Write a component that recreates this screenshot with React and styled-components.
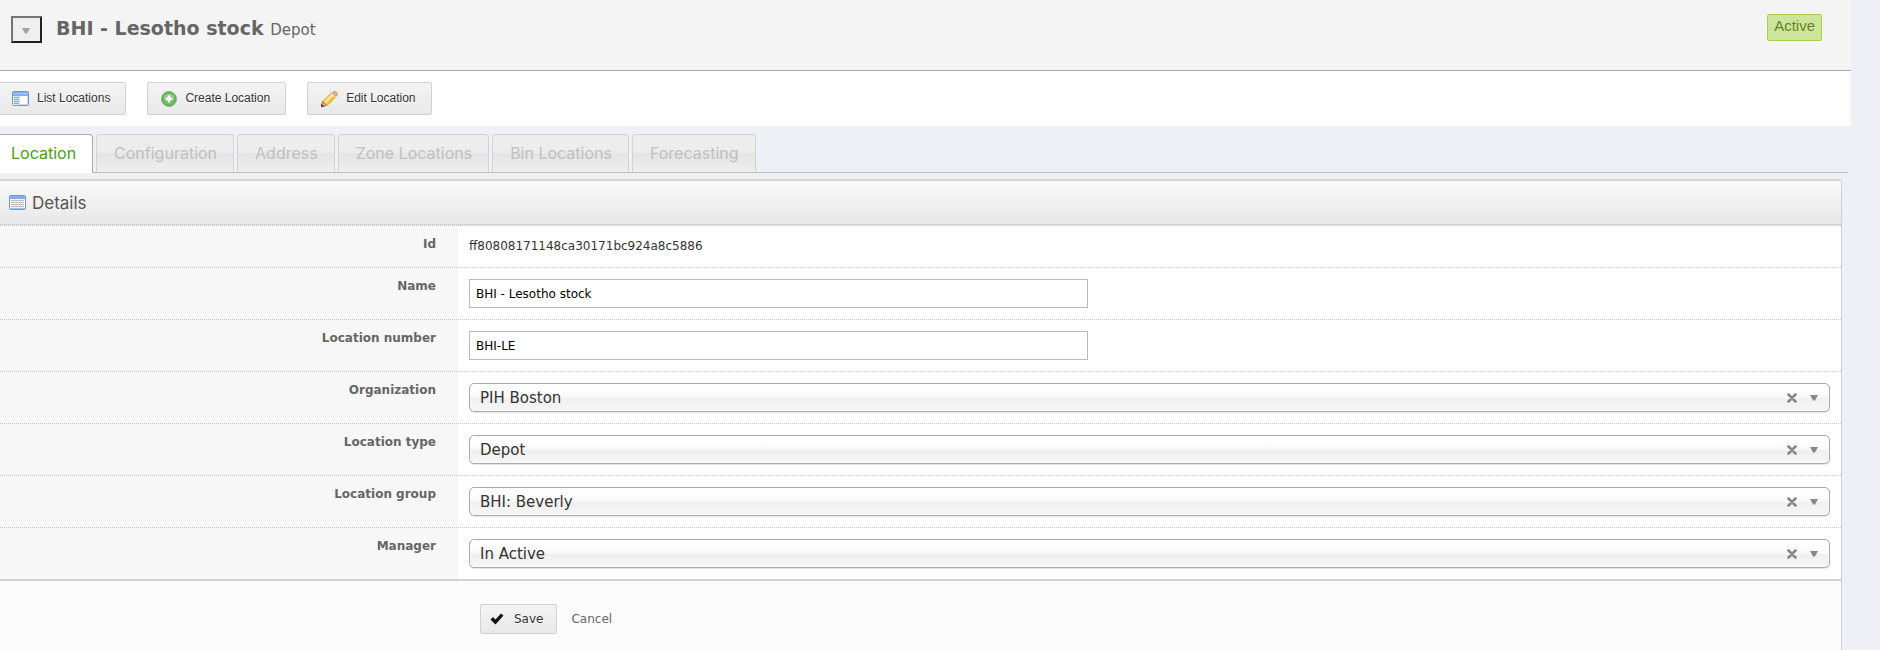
import React, { useState } from 'react';
import styled, { createGlobalStyle, css } from 'styled-components';

const actions = [
	{ name: 'List Locations', icon: 'list' },
	{ name: 'Create Location', icon: 'add' },
	{ name: 'Edit Location', icon: 'pencil' },
];

const tabs = ['Location', 'Configuration', 'Address', 'Zone Locations', 'Bin Locations', 'Forecasting'];

const selects = [
	{ id: 'organization', label: 'Organization', value: 'PIH Boston' },
	{ id: 'locationType', label: 'Location type', value: 'Depot' },
	{ id: 'locationGroup', label: 'Location group', value: 'BHI: Beverly' },
	{ id: 'manager', label: 'Manager', value: 'In Active' },
];

const ListIcon = () => (
	<svg width="17" height="16" viewBox="0 0 17 16" aria-hidden="true">
		<rect x="0.5" y="0.5" width="16" height="14" rx="1" fill="#fff" stroke="#6f97d3" />
		<rect x="1" y="1" width="15" height="4" fill="#86aee6" />
		<path d="M1 2.500h15" stroke="#a9c8f1" />
		<rect x="1" y="5" width="6" height="9" fill="#e9f0fa" />
		<path d="M2 6.500h4M2 8.500h4M2 10.500h4M2 12.500h4" stroke="#7b9fd3" />
		<path d="M7 5v9" stroke="#8db0e0" />
		<path d="M8 13.500h8M15.500 5v9" stroke="#c5daf5" />
	</svg>
);

const AddIcon = () => (
	<svg width="16" height="16" viewBox="0 0 16 16" aria-hidden="true">
		<circle cx="8" cy="8" r="7.5" fill="#5fa757" stroke="#86bb80" />
		<circle cx="8" cy="8" r="6" fill="#76bc6b" />
		<path d="M2.500 7a5.600 5 0 0 1 11 0z" fill="#97d08c" />
		<path d="M8 4.500v7M4.500 8h7" stroke="#fff" strokeWidth="2.400" />
	</svg>
);

const PencilIcon = () => (
	<svg width="17" height="16" viewBox="0 0 17 16" aria-hidden="true">
		<path d="M1.500 11L11 1.500l4 4L5.500 15z" fill="#f8c93f" stroke="#cf9236" />
		<path d="M4 11l8-8" stroke="#fdee9f" strokeWidth="2" />
		<path d="M11.500 1.500Q14-0.500 15.800 1.500T15 5z" fill="#eebd9a" stroke="#c88a5c" />
		<path d="M10.500 2l4 4" stroke="#dcd8d0" strokeWidth="1.500" />
		<path d="M0.500 15.500l1-5 4 4z" fill="#dcaa76" stroke="#b27b46" />
		<path d="M0 16v-3.500L3.500 16z" fill="#5b4433" />
	</svg>
);

const TableIcon = () => (
	<svg width="17" height="16" viewBox="0 0 17 16" aria-hidden="true">
		<rect x="0.5" y="0.5" width="16" height="14" rx="1" fill="#fff" stroke="#7298d0" />
		<rect x="1" y="1" width="15" height="3" fill="#86aee6" />
		<path d="M2 5.500h13M2 7.500h13M2 9.500h13M2 11.500h13" stroke="#b0b0b0" strokeDasharray="3 1" />
		<path d="M1 13.500h15" stroke="#a4c0e8" />
		<path d="M5.500 4v9M9.500 4v9M13.500 4v9" stroke="#dedede" />
	</svg>
);

const CheckIcon = () => (
	<svg width="14" height="14" viewBox="0 0 14 14" aria-hidden="true">
		<path d="M0.500 7.500L3 5l2.500 2.500L11 1.500l2.500 2L5.500 12.500z" fill="#111" />
	</svg>
);

const ArrowIcon = ({ color = '#888' }) => (
	<svg width="8" height="6" viewBox="0 0 8 6" aria-hidden="true">
		<path d="M0 0h8L5 5.500H3z" fill={color} />
	</svg>
);

const CrossIcon = () => (
	<svg width="10" height="10" viewBox="0 0 10 10" aria-hidden="true">
		<path d="M1.500 1.500l7 7M8.500 1.500l-7 7" stroke="#888" strokeWidth="2.600" strokeLinecap="round" />
	</svg>
);

const icons = { list: ListIcon, add: AddIcon, pencil: PencilIcon };

const SelectRow = ({ id, label, value }) => {
	const [current, setCurrent] = useState(value);
	return (
		<Row>
			<Label htmlFor={id}>{label}</Label>
			<Value>
				<SelectBox>
					<Select id={id} value={current} onChange={(e) => setCurrent(e.target.value)}>
						<option value=""></option>
						<option>{value}</option>
					</Select>
					<ClearButton type="button" aria-label={`Clear ${label}`} onClick={() => setCurrent('')}>
						<CrossIcon />
					</ClearButton>
					<ArrowIcon />
				</SelectBox>
			</Value>
		</Row>
	);
};

const App = () => (
	<>
		<GlobalStyle />
		<Header>
			<MenuButton type="button" aria-label="Location actions">
				<ArrowIcon color="#a3a3a3" />
			</MenuButton>
			<Title>
				BHI - Lesotho stock <small>Depot</small>
			</Title>
			<Status>Active</Status>
		</Header>
		<Toolbar>
			{actions.map(({ name, icon }) => {
				const Icon = icons[icon];
				return (
					<ToolButton key={name} type="button">
						<Icon />
						<span>{name}</span>
					</ToolButton>
				);
			})}
		</Toolbar>
		<Tabs>
			{tabs.map((tab, i) => (
				<Tab key={tab} href={`#tab-${i}`} $active={i === 0}>{tab}</Tab>
			))}
		</Tabs>
		<Panel>
			<PanelTitle>
				<TableIcon />
				Details
			</PanelTitle>
			<form onSubmit={(e) => e.preventDefault()}>
				<Row>
					<Term>Id</Term>
					<Value>ff80808171148ca30171bc924a8c5886</Value>
				</Row>
				<Row>
					<Label htmlFor="name">Name</Label>
					<Value>
						<Input id="name" type="text" defaultValue="BHI - Lesotho stock" />
					</Value>
				</Row>
				<Row>
					<Label htmlFor="locationNumber">Location number</Label>
					<Value>
						<Input id="locationNumber" type="text" defaultValue="BHI-LE" />
					</Value>
				</Row>
				{selects.map((item) => <SelectRow key={item.id} {...item} />)}
				<Footer>
					<SaveButton type="submit">
						<CheckIcon />
						Save
					</SaveButton>
					<Cancel href="#list">Cancel</Cancel>
				</Footer>
			</form>
		</Panel>
	</>
);
export default App;

const GlobalStyle = createGlobalStyle`
	* {
		box-sizing: border-box;
	}
	body {
		margin: 0;
		background: #eff0f5;
		color: #333;
		font-family: Verdana, "DejaVu Sans", sans-serif;
		font-size: 12px;
	}
	#root {
		display: flex;
		flex-direction: column;
		min-height: 100vh;
	}
`
const Header = styled.header`
	display: flex;
	align-items: flex-start;
	height: 71px;
	margin-right: 29px;
	padding: 14px 29px 0 11px;
	background: #f4f4f4;
	border-bottom: 1px solid #a9a9a9;
`
const MenuButton = styled.button`
	display: flex;
	align-items: center;
	justify-content: center;
	width: 31px;
	height: 27px;
	margin-top: 2px;
	padding: 2px 2px 0 0;
	background: #efefef;
	border: 2px solid;
	border-color: #767676 #212121 #212121 #767676;
`
const Title = styled.h1`
	flex: 1;
	margin: 0 0 0 14px;
	color: #666;
	font-size: 19px;
	line-height: 29px;

	small {
		font-size: 15px;
		font-weight: normal;
	}
`
const Status = styled.span`
	height: 27px;
	padding: 0 6px;
	background: #cde69c;
	border: 1px solid #a5d24a;
	border-radius: 2px;
	color: #638421;
	font-family: "Liberation Sans", Arial, sans-serif;
	font-size: 15px;
	line-height: 22px;
`
const Toolbar = styled.div`
	display: flex;
	gap: 21px;
	margin-right: 29px;
	padding: 11px 0;
	background: #fff;
`
const buttonLook = css`
	display: flex;
	align-items: center;
	background: linear-gradient(#f4f4f4, #e9e9e9);
	border: 1px solid #d2d2d2;
	border-radius: 2px;
	color: #333;
	font-size: 12px;
	text-shadow: 0 1px 0 #fff;
	cursor: pointer;
`
const ToolButton = styled.button`
	${buttonLook}
	gap: 8px;
	height: 33px;
	padding: 0 15px 0 13px;
	font-family: "Liberation Sans", Arial, sans-serif;

	span {
		padding-bottom: 2px;
	}

	&:first-child {
		padding-left: 12px;
		border-left: 0;
		border-radius: 0 2px 2px 0;
	}
`
const Tabs = styled.nav`
	display: flex;
	gap: 3px;
	margin: 8px 32px 0 0;
	border-bottom: 1px solid #bbb;
`
const Tab = styled.a`
	height: 38px;
	padding: 0 16px 0 17px;
	background: linear-gradient(#ededed 50%, #e4e4e4 50%, #efefef);
	border: 1px solid #d3d3d3;
	border-bottom: 0;
	border-radius: 4px 4px 0 0;
	color: #bfbfbf;
	font-family: Inter, sans-serif;
	font-size: 16px;
	line-height: 37px;
	text-decoration: none;

	${({ $active }) => $active && css`
		height: 39px;
		margin-bottom: -1px;
		padding-left: 11px;
		background: #fff;
		border-color: #aaa;
		border-left: 0;
		border-radius: 0 4px 0 0;
		color: #48a010;
	`}
`
const Panel = styled.section`
	display: flex;
	flex: 1;
	flex-direction: column;
	margin: 6px 38px 0 0;
	background: #fcfcfc;
	border-top: 2px solid #d3d3d3;
	border-right: 1px solid #cfd0d4;
	border-radius: 0 3px 0 0;
`
const PanelTitle = styled.h2`
	display: flex;
	align-items: center;
	gap: 6px;
	height: 44px;
	margin: 0;
	padding-left: 9px;
	background: linear-gradient(#fafafa, #e7e7e7);
	border-bottom: 1px solid #d3d3d3;
	color: #555;
	font-family: Inter, sans-serif;
	font-size: 17px;
	font-weight: normal;
`
const Row = styled.div`
	display: grid;
	grid-template-columns: 458px 1fr;
	min-height: 42px;
	background: #fff;
	border-top: 1px dotted #c3c3c3;
`
const labelLook = css`
	padding: 10px 22px 0 0;
	background: #f7f7f7;
	color: #666;
	font-weight: bold;
	line-height: 16px;
	text-align: right;
`
const Label = styled.label`
	${labelLook}
`
const Term = styled.span`
	${labelLook}
`
const Value = styled.div`
	padding: 11px;
	line-height: 18px;
`
const Input = styled.input`
	display: block;
	width: 100%;
	max-width: 619px;
	height: 29px;
	padding: 0 6px;
	background: #fff;
	border: 1px solid #bbb;
	color: #000;
	font: inherit;
`
const SelectBox = styled.div`
	display: flex;
	align-items: center;
	height: 29px;
	padding-right: 11px;
	background: linear-gradient(#fff 20%, #f8f8f8 50%, #efefef 52%, #f6f6f6);
	border: 1px solid #aaa;
	border-radius: 5px;
	box-shadow: 0 0 3px #fff inset, 0 1px 1px rgba(0, 0, 0, 0.1);
`
const Select = styled.select`
	flex: 1;
	height: 27px;
	padding: 0 10px;
	appearance: none;
	background: none;
	border: 0;
	color: #333;
	font-family: inherit;
	font-size: 15px;
`
const ClearButton = styled.button`
	display: flex;
	margin-right: 13px;
	padding: 0;
	background: none;
	border: 0;
	cursor: pointer;
`
const Footer = styled.div`
	display: flex;
	align-items: center;
	gap: 14px;
	padding: 23px 0 16px 480px;
	border-top: 2px solid #d3d3d3;
`
const SaveButton = styled.button`
	${buttonLook}
	gap: 10px;
	height: 30px;
	padding: 0 13px 0 9px;
	font-family: inherit;
`
const Cancel = styled.a`
	color: #666;
	text-decoration: none;
`
